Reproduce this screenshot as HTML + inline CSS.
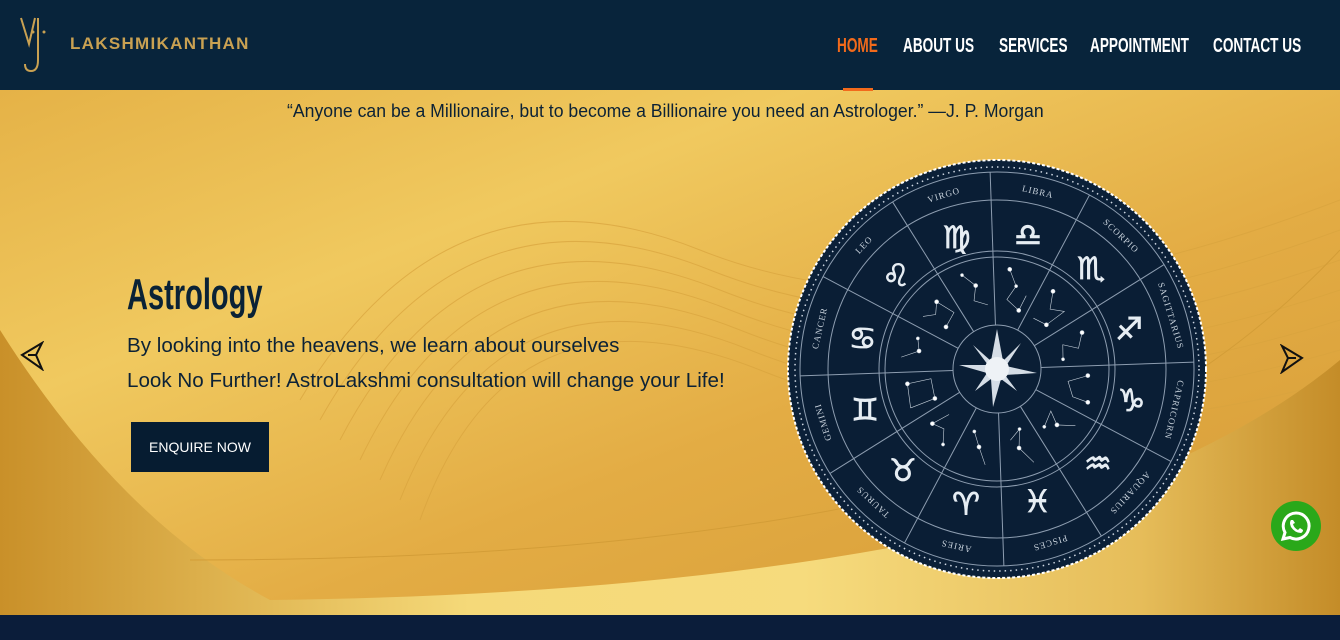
<!DOCTYPE html>
<html><head><meta charset="utf-8"><style>
*{margin:0;padding:0;box-sizing:border-box}
body{width:1340px;height:640px;overflow:hidden;font-family:"Liberation Sans",sans-serif;position:relative;background:#e2ad45}
.hdr{position:absolute;left:0;top:0;width:1340px;height:90px;background:#08243b;z-index:3}
.logo{position:absolute;left:20px;top:14px}
.brand{position:absolute;left:70px;top:34px;color:#c9a152;font-size:17px;letter-spacing:1.3px;font-weight:bold}
.nav a{position:absolute;top:35px;color:#fff;font-size:20px;font-weight:bold;text-decoration:none;display:inline-block;transform:scaleX(.68);transform-origin:left top;white-space:nowrap}
.ul{position:absolute;left:843px;top:88px;width:30px;height:3px;background:#f26a1b}
.hero{position:absolute;left:0;top:90px;width:1340px;height:525px}
.foot{position:absolute;left:0;top:615px;width:1340px;height:25px;background:#0b1d3a}
.quote{position:absolute;left:287px;top:101px;font-size:18px;color:#0c2236;white-space:nowrap;transform:scaleX(.98);transform-origin:left top}
h1{position:absolute;left:127px;top:270px;font-size:44px;color:#0a2236;font-weight:bold;transform:scaleX(.66);transform-origin:left top;letter-spacing:0}
.p{position:absolute;left:127px;font-size:20px;color:#0c2236;white-space:nowrap;transform:scaleX(1.03);transform-origin:left top}
.btn{position:absolute;left:131px;top:422px;width:138px;height:50px;background:#061c31;color:#fff;font-size:14px;text-align:center;line-height:50px}
.wa{position:absolute;left:1271px;top:501px;width:50px;height:50px;border-radius:50%;background:#2aa81a}
</style></head><body>
<div class="hdr">
<svg class="logo" width="40" height="60" viewBox="0 0 40 60"><path d="M1,4 L9,30 L15,4" fill="none" stroke="#c9a152" stroke-width="2"/><path d="M18,4 L18,46 Q18,57 11,57 Q5,57 5,50" fill="none" stroke="#c9a152" stroke-width="2"/><circle cx="13" cy="18" r="1.5" fill="#c9a152"/><circle cx="24" cy="18" r="1.5" fill="#c9a152"/></svg>
<div class="brand">LAKSHMIKANTHAN</div>
<div class="nav"><a style="left:837px;color:#f26a1b">HOME</a><a style="left:903px">ABOUT US</a><a style="left:999px">SERVICES</a><a style="left:1090px">APPOINTMENT</a><a style="left:1213px">CONTACT US</a></div>
<div class="ul"></div>
</div>
<svg class="hero" width="1340" height="525" viewBox="0 90 1340 525">
<defs>
<linearGradient id="bg" x1="0" y1="0" x2="1" y2="1"><stop offset="0" stop-color="#e5b247"/><stop offset=".3" stop-color="#f0c95f"/><stop offset=".6" stop-color="#e3ac44"/><stop offset="1" stop-color="#d59b36"/></linearGradient>
<linearGradient id="lo" x1="0" y1="0" x2="1" y2="0"><stop offset="0" stop-color="#c99029"/><stop offset=".35" stop-color="#f5d979"/><stop offset=".6" stop-color="#f6db7d"/><stop offset=".85" stop-color="#e6bd5a"/><stop offset="1" stop-color="#c48c28"/></linearGradient>
</defs>
<rect x="0" y="90" width="1340" height="525" fill="url(#bg)"/>
<g fill="none" stroke="#d9a43e" stroke-width="1" opacity=".7">
<path d="M300,400 Q450,150 700,250 T1340,200"/><path d="M320,420 Q460,170 710,270 T1340,230"/><path d="M340,440 Q470,190 720,290 T1340,260"/><path d="M360,460 Q480,210 730,310 T1340,290"/><path d="M380,480 Q490,230 740,330 T1340,320"/><path d="M400,500 Q500,250 750,350 T1340,350"/><path d="M420,520 Q510,270 760,370 T1340,380"/>
</g>
<path d="M0,330 Q120,520 270,600 Q700,595 1000,525 Q1220,460 1340,360 L1340,615 L0,615 Z" fill="url(#lo)"/>
<path d="M190,560 Q700,560 1000,470 Q1200,400 1340,250" fill="none" stroke="#d39d37" stroke-width="1"/>
</svg>
<div class="foot"></div>
<div class="quote">“Anyone can be a Millionaire, but to become a Billionaire you need an Astrologer.” —J. P. Morgan</div>
<h1>Astrology</h1>
<div class="p" style="top:335px">By looking into the heavens, we learn about ourselves</div>
<div class="p" style="top:370px">Look No Further! AstroLakshmi consultation will change your Life!</div>
<div class="btn">ENQUIRE NOW</div>
<svg style="position:absolute;left:20px;top:341px" width="24" height="30" viewBox="0 0 24 30"><path d="M22,2 L2,14 L22,28 L16,14 Z" fill="none" stroke="#111" stroke-width="2"/><path d="M16,14 L8,14" stroke="#111" stroke-width="2"/></svg>
<svg style="position:absolute;left:1280px;top:344px" width="24" height="30" viewBox="0 0 24 30"><path d="M2,2 L22,14 L2,28 L8,14 Z" fill="none" stroke="#111" stroke-width="2"/><path d="M8,14 L16,14" stroke="#111" stroke-width="2"/></svg>
<svg style="position:absolute;left:777px;top:149px" width="440" height="440" viewBox="-220 -220 440 440">
<circle r="209" fill="#0b2038" stroke="#fff" stroke-width="2" stroke-dasharray="3 2"/>
<circle r="202" fill="none" stroke="#cfd8e3" stroke-width="1.5" stroke-dasharray="1.5 4"/>
<circle r="197" fill="#0a1e35" stroke="#8d9db0" stroke-width="1"/>
<circle r="169" fill="none" stroke="#8d9db0" stroke-width="1"/>
<circle r="118" fill="none" stroke="#8d9db0" stroke-width="1"/>
<circle r="112" fill="none" stroke="#8d9db0" stroke-width="1"/>
<circle r="44" fill="#0a1e35" stroke="#8d9db0" stroke-width="1"/>
<g stroke="#8d9db0" stroke-width="1">
<line x1="0" y1="-44" x2="0" y2="-197" transform="rotate(-2)"/><line x1="0" y1="-44" x2="0" y2="-197" transform="rotate(28)"/><line x1="0" y1="-44" x2="0" y2="-197" transform="rotate(58)"/><line x1="0" y1="-44" x2="0" y2="-197" transform="rotate(88)"/><line x1="0" y1="-44" x2="0" y2="-197" transform="rotate(118)"/><line x1="0" y1="-44" x2="0" y2="-197" transform="rotate(148)"/><line x1="0" y1="-44" x2="0" y2="-197" transform="rotate(178)"/><line x1="0" y1="-44" x2="0" y2="-197" transform="rotate(208)"/><line x1="0" y1="-44" x2="0" y2="-197" transform="rotate(238)"/><line x1="0" y1="-44" x2="0" y2="-197" transform="rotate(268)"/><line x1="0" y1="-44" x2="0" y2="-197" transform="rotate(298)"/><line x1="0" y1="-44" x2="0" y2="-197" transform="rotate(328)"/>
</g>
<g fill="#c8d2dc" font-family="Liberation Serif,serif" font-size="9" text-anchor="middle" letter-spacing="1">
<text transform="rotate(13) translate(0,-179)">LIBRA</text><text transform="rotate(43) translate(0,-179)">SCORPIO</text><text transform="rotate(73) translate(0,-179)">SAGITTARIUS</text><text transform="rotate(103) translate(0,-179)">CAPRICORN</text><text transform="rotate(133) translate(0,-179)">AQUARIUS</text><text transform="rotate(163) translate(0,-179)">PISCES</text><text transform="rotate(193) translate(0,-179)">ARIES</text><text transform="rotate(223) translate(0,-179)">TAURUS</text><text transform="rotate(253) translate(0,-179)">GEMINI</text><text transform="rotate(283) translate(0,-179)">CANCER</text><text transform="rotate(313) translate(0,-179)">LEO</text><text transform="rotate(343) translate(0,-179)">VIRGO</text>
</g>
<g fill="#e6edf3" stroke="#e6edf3" stroke-width=".8" font-family="DejaVu Sans,sans-serif" font-size="31" text-anchor="middle">
<text transform="rotate(13) translate(0,-138) rotate(-13)" dy="11">♎</text><text transform="rotate(43) translate(0,-138) rotate(-43)" dy="11">♏</text><text transform="rotate(73) translate(0,-138) rotate(-73)" dy="11">♐</text><text transform="rotate(103) translate(0,-138) rotate(-103)" dy="11">♑</text><text transform="rotate(133) translate(0,-138) rotate(-133)" dy="11">♒</text><text transform="rotate(163) translate(0,-138) rotate(-163)" dy="11">♓</text><text transform="rotate(193) translate(0,-138) rotate(-193)" dy="11">♈</text><text transform="rotate(223) translate(0,-138) rotate(-223)" dy="11">♉</text><text transform="rotate(253) translate(0,-138) rotate(-253)" dy="11">♊</text><text transform="rotate(283) translate(0,-138) rotate(-283)" dy="11">♋</text><text transform="rotate(313) translate(0,-138) rotate(-313)" dy="11">♌</text><text transform="rotate(343) translate(0,-138) rotate(-343)" dy="11">♍</text>
</g>
<g fill="#fff" stroke="#c8d2dc" stroke-width=".6">
<g transform="rotate(13)"><polyline points="-10,-100 0,-85 -6,-70 8,-62 12,-78" fill="none"/><circle cx="-10" cy="-100" r="2"/><circle cx="0" cy="-85" r="1.5"/><circle cx="8" cy="-62" r="2"/></g>
<g transform="rotate(43)"><polyline points="-12,-95 -2,-80 10,-88 6,-66 -8,-62" fill="none"/><circle cx="-12" cy="-95" r="2"/><circle cx="6" cy="-66" r="2"/></g>
<g transform="rotate(73)"><polyline points="-10,-92 4,-84 -4,-70 10,-66" fill="none"/><circle cx="-10" cy="-92" r="2"/><circle cx="10" cy="-66" r="1.5"/></g>
<g transform="rotate(103)"><polyline points="-14,-90 -4,-72 10,-80 12,-96" fill="none"/><circle cx="-14" cy="-90" r="2"/><circle cx="12" cy="-96" r="2"/></g>
<g transform="rotate(133)"><polyline points="-12,-96 0,-82 -6,-68 10,-74" fill="none"/><circle cx="0" cy="-82" r="2"/><circle cx="10" cy="-74" r="1.5"/></g>
<g transform="rotate(163)"><polyline points="-8,-100 2,-82 -4,-64 8,-72" fill="none"/><circle cx="2" cy="-82" r="2"/><circle cx="-4" cy="-64" r="1.5"/></g>
<g transform="rotate(193)"><polyline points="-10,-96 0,-80 8,-66" fill="none"/><circle cx="0" cy="-80" r="2"/><circle cx="8" cy="-66" r="1.5"/></g>
<g transform="rotate(223)"><polyline points="-12,-92 -2,-80 10,-84 4,-66" fill="none"/><circle cx="-12" cy="-92" r="1.5"/><circle cx="10" cy="-84" r="2"/></g>
<g transform="rotate(253)"><polyline points="-12,-94 12,-90 10,-66 -10,-68 -12,-94" fill="none"/><circle cx="12" cy="-90" r="2"/><circle cx="-10" cy="-68" r="2"/></g>
<g transform="rotate(283)"><polyline points="-10,-96 0,-80 12,-84" fill="none"/><circle cx="0" cy="-80" r="2"/><circle cx="12" cy="-84" r="1.5"/></g>
<g transform="rotate(313)"><polyline points="-12,-90 -2,-82 8,-90 12,-70 -4,-66" fill="none"/><circle cx="8" cy="-90" r="2"/><circle cx="-4" cy="-66" r="2"/></g>
<g transform="rotate(343)"><polyline points="-6,-100 4,-86 -2,-72 10,-64" fill="none"/><circle cx="-6" cy="-100" r="1.5"/><circle cx="4" cy="-86" r="2"/></g>
</g>
<g fill="#d5dde6"><path d="M0,-40 L6,-8 L24,-26 L9,-3 L40,4 L8,6 L20,22 L4,10 L-4,38 L-6,10 L-22,22 L-10,4 L-38,-4 L-9,-4 L-24,-24 L-6,-8 Z"/><circle r="12" fill="#eef2f6"/></g>
</svg>
<div class="wa"><svg width="50" height="50" viewBox="0 0 50 50"><path d="M25,12 A13,13 0 1 1 19,36.5 L12,38 L14,31.5 A13,13 0 0 1 25,12 Z" fill="none" stroke="#fff" stroke-width="3"/><path d="M20,19 Q18,21 20,26 Q24,32 30,32 Q32,31 32,29 L29,27 L27,29 Q23,27 22,23 L24,22 L22,19 Z" fill="#fff"/></svg></div>
</body></html>
